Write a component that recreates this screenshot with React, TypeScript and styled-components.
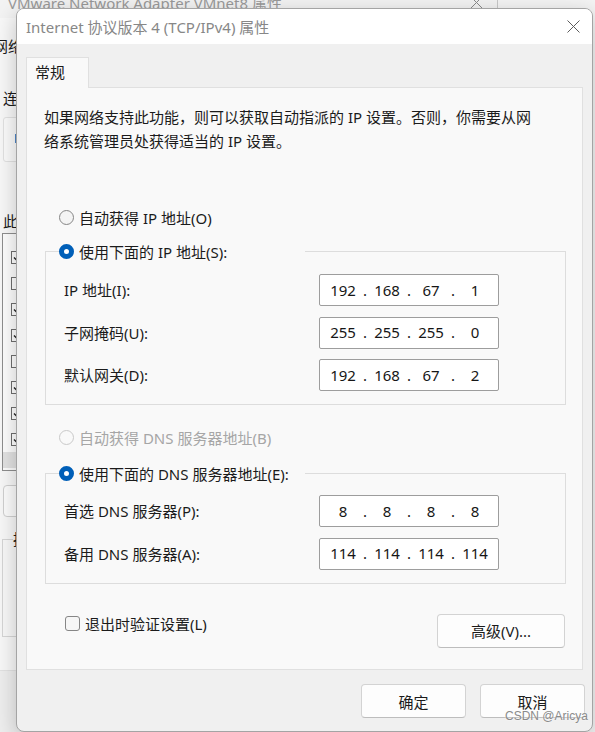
import styled, { createGlobalStyle } from "styled-components";

const GlobalStyle = createGlobalStyle`
  html, body {
    margin: 0;
    padding: 0;
  }
  body {
    font-family: "Noto Sans", "Noto Sans CJK SC", sans-serif;
    font-size: 15px;
    color: #1b1b1b;
  }
`;

const Desktop = styled.div`
  position: relative;
  width: 595px;
  height: 732px;
  overflow: hidden;
  background: #f4f4f4;
`;

/* ---------- window behind (VMnet8 properties) ---------- */

const BackWindow = styled.div`
  position: absolute;
  left: -20px;
  top: -14px;
  width: 517px;
  height: 760px;
  display: flex;
  flex-direction: column;
  background: #f8f8f8;
  border-right: 1px solid #c8c8c8;
`;

const BackTitle = styled.div`
  height: 32px;
  flex-shrink: 0;
  display: flex;
  align-items: center;
  justify-content: space-between;
  padding: 0 14px 0 28px;
  background: #f3f3f3;
  color: #9a9a9a;
  white-space: nowrap;
`;

const BackBody = styled.div`
  display: flex;
  flex-direction: column;
  flex: 1;
  padding-left: 22px;
`;

const BackTab = styled.div`
  height: 32px;
  line-height: 32px;
  margin: 12px 0 0 -9px;
`;

const BackLabel = styled.div<{ $top: number }>`
  line-height: 24px;
  margin-top: ${(p) => p.$top}px;
  margin-left: 1px;
  white-space: nowrap;
`;

const AdapterBox = styled.div`
  height: 45px;
  width: 440px;
  margin: 7px 0 0 1px;
  box-sizing: border-box;
  display: flex;
  align-items: center;
  padding-left: 10px;
  border: 1px solid #e2e2e2;
  border-radius: 3px;
  background: #fbfbfb;
`;

const ItemList = styled.div`
  height: 238px;
  width: 460px;
  box-sizing: border-box;
  display: flex;
  flex-direction: column;
  padding: 10px 0 0 8px;
  border: 1px solid #8e8e8e;
  background: #fdfdfd;
`;

const Item = styled.div`
  height: 26px;
  display: flex;
  align-items: center;
`;

const SmallCheck = styled.span`
  width: 13px;
  height: 13px;
  box-sizing: border-box;
  border: 1px solid #6f6f6f;
  background: #fff;
  display: flex;
  align-items: center;
  justify-content: center;
`;

const ScrollStrip = styled.div`
  height: 16px;
  margin: 0 0 0 -8px;
  background: #e2e2e2;
`;

const BackButton = styled.div`
  height: 32px;
  width: 100px;
  margin: 14px 0 0 1px;
  box-sizing: border-box;
  border: 1px solid #d0d0d0;
  border-radius: 4px;
  background: #fcfcfc;
`;

const BackGroup = styled.fieldset`
  height: 110px;
  width: 460px;
  margin: 10px 0 0 0;
  padding: 0 0 0 10px;
  box-sizing: border-box;
  border: 1px solid #d6d6d6;

  legend {
    padding: 0;
    line-height: 24px;
  }
`;

const BackFooter = styled.div`
  flex: 1;
  margin: 33px 0 0 -22px;
  border-top: 1px solid #e2e2e2;
  background: #eeeeee;
`;

/* ---------- front dialog (TCP/IPv4 properties) ---------- */

const Dialog = styled.div`
  position: absolute;
  left: 16px;
  top: 8px;
  width: 577px;
  height: 724px;
  box-sizing: border-box;
  display: flex;
  flex-direction: column;
  background: #f0f0f0;
  border: 1px solid #a4a4a4;
  border-radius: 8px;
  overflow: hidden;
  box-shadow: 0 6px 22px rgba(0, 0, 0, 0.22);
`;

const TitleBar = styled.div`
  height: 35px;
  flex-shrink: 0;
  display: flex;
  align-items: center;
  justify-content: space-between;
  padding: 0 12px 0 9px;
  background: #ffffff;
  color: #878787;
`;

const Body = styled.div`
  display: flex;
  flex-direction: column;
  padding: 13px 9px 0 9px;
`;

const Tab = styled.div`
  position: relative;
  z-index: 1;
  width: 63px;
  height: 31px;
  box-sizing: border-box;
  margin-bottom: -1px;
  padding-left: 8px;
  line-height: 28px;
  border: 1px solid #e0e0e0;
  border-bottom: none;
  background: #f9f9f9;
`;

const Panel = styled.div`
  height: 583px;
  box-sizing: border-box;
  display: flex;
  flex-direction: column;
  padding: 17px 16px 0 17px;
  border: 1px solid #e0e0e0;
  background: #f9f9f9;
`;

const Description = styled.p`
  margin: 0;
  line-height: 24px;
  white-space: nowrap;
`;

const RadioRow = styled.div<{ $top: number; $disabled?: boolean }>`
  height: 24px;
  display: flex;
  align-items: center;
  margin-top: ${(p) => p.$top}px;
  padding-left: 15px;
  color: ${(p) => (p.$disabled ? "#a6a6a6" : "inherit")};
  white-space: nowrap;
`;

const Radio = styled.span<{ $checked?: boolean; $disabled?: boolean }>`
  width: 15px;
  height: 15px;
  flex-shrink: 0;
  box-sizing: border-box;
  margin-right: 5px;
  border-radius: 50%;
  background: ${(p) => (p.$checked ? "#ffffff" : p.$disabled ? "#f9f9f9" : "#f4f4f4")};
  border: ${(p) =>
    p.$checked
      ? "5px solid #005fb8"
      : p.$disabled
      ? "1px solid #c9c9c9"
      : "1px solid #868686"};
`;

const Group = styled.fieldset<{ $top: number; $padTop: number; $padBottom: number }>`
  margin: ${(p) => p.$top}px 0 0 1px;
  padding: ${(p) => p.$padTop}px 0 ${(p) => p.$padBottom}px 13px;
  border: 1px solid #dddddd;
  display: grid;
  row-gap: 10.5px;
  min-width: 0;
`;

const GroupTitle = styled.legend`
  width: 246px;
  height: 24px;
  padding: 0;
  display: flex;
  align-items: center;
  white-space: nowrap;
`;

const FieldRow = styled.div`
  display: grid;
  grid-template-columns: 260px 180px;
  align-items: center;
`;

const FieldLabel = styled.span`
  padding-left: 5px;
  line-height: 30px;
  white-space: nowrap;
`;

const IpBox = styled.div`
  height: 32px;
  box-sizing: border-box;
  display: grid;
  grid-template-columns: 36px 8px 36px 8px 36px 8px 36px;
  align-items: center;
  padding: 0 5px;
  border: 1px solid #9d9d9d;
  border-radius: 2px;
  background: #ffffff;
  line-height: 29px;
  text-align: center;
  color: #161616;
`;

const BottomRow = styled.div`
  display: flex;
  align-items: flex-start;
  justify-content: space-between;
  margin-top: 28px;
  padding-left: 21px;
  margin-right: 1px;
`;

const CheckRow = styled.label`
  height: 24px;
  display: flex;
  align-items: center;
  gap: 5px;
  white-space: nowrap;
`;

const CheckBox = styled.span`
  width: 15px;
  height: 15px;
  box-sizing: border-box;
  border: 1px solid #868686;
  border-radius: 3px;
  background: #f6f6f6;
`;

const Button = styled.button<{ $width: number; $top?: number }>`
  width: ${(p) => p.$width}px;
  height: 34px;
  margin-top: ${(p) => p.$top ?? 0}px;
  padding: 0;
  box-sizing: border-box;
  font: inherit;
  color: #1b1b1b;
  background: #fdfdfd;
  border: 1px solid #d3d3d3;
  border-bottom-color: #bdbdbd;
  border-radius: 4px;
`;

const Footer = styled.div`
  display: flex;
  justify-content: flex-end;
  gap: 14px;
  margin: 14px -2px 0 0;
`;

const Watermark = styled.div`
  position: absolute;
  left: 505px;
  top: 708px;
  font-family: "Liberation Sans", Arial, sans-serif;
  font-size: 12px;
  line-height: 16px;
  color: #8a8a8a;
  text-shadow: 0 0 2px #ffffff;
`;

const CloseIcon = ({ color }: { color: string }) => (
  <svg width="13" height="13" viewBox="0 0 13 13">
    <path d="M0.5 0.5 L12.5 12.5 M12.5 0.5 L0.5 12.5" stroke={color} strokeWidth="1" fill="none" />
  </svg>
);

const Tick = () => (
  <svg width="9" height="9" viewBox="0 0 9 9">
    <path d="M1 4.5 L3.5 7 L8 1.5" stroke="#222" strokeWidth="1.4" fill="none" />
  </svg>
);

const IpValue = ({ parts }: { parts: string[] }) => (
  <IpBox>
    {parts.flatMap((part, i) =>
      i > 0
        ? [<span key={`d${i}`}>.</span>, <span key={`p${i}`}>{part}</span>]
        : [<span key={`p${i}`}>{part}</span>]
    )}
  </IpBox>
);

// only the check boxes of the list peek out from behind the dialog
const checked = [true, false, true, true, false, true, true, true];

const App = () => {
  return (
    <>
      <GlobalStyle />
      <Desktop>
        <BackWindow>
          <BackTitle>
            <span>VMware Network Adapter VMnet8 属性</span>
            <CloseIcon color="#8a8a8a" />
          </BackTitle>
          <BackBody>
            <BackTab>网络</BackTab>
            <BackLabel $top={24}>连接时使用:</BackLabel>
            <AdapterBox>
              <svg width="16" height="16" viewBox="0 0 16 16">
                <rect x="1" y="2" width="14" height="9" fill="#4f86c6" />
                <rect x="6" y="11" width="4" height="3" fill="#7a7a7a" />
              </svg>
            </AdapterBox>
            <BackLabel $top={47}>此连接使用下列项目(O):</BackLabel>
            <ItemList>
              {checked.map((on, i) => (
                <Item key={i}>
                  <SmallCheck>{on && <Tick />}</SmallCheck>
                </Item>
              ))}
              <ScrollStrip />
            </ItemList>
            <BackButton />
            <BackGroup>
              <legend>描述</legend>
            </BackGroup>
            <BackFooter />
          </BackBody>
        </BackWindow>

        <Dialog>
          <TitleBar>
            <span>Internet 协议版本 4 (TCP/IPv4) 属性</span>
            <CloseIcon color="#5c5c5c" />
          </TitleBar>
          <Body>
            <Tab>常规</Tab>
            <Panel>
              <Description>
                如果网络支持此功能，则可以获取自动指派的 IP 设置。否则，你需要从网
                <br />
                络系统管理员处获得适当的 IP 设置。
              </Description>

              <RadioRow $top={52}>
                <Radio />
                自动获得 IP 地址(O)
              </RadioRow>
              <Group $top={10} $padTop={11} $padBottom={13}>
                <GroupTitle>
                  <Radio $checked />
                  使用下面的 IP 地址(S):
                </GroupTitle>
                <FieldRow>
                  <FieldLabel>IP 地址(I):</FieldLabel>
                  <IpValue parts={["192", "168", "67", "1"]} />
                </FieldRow>
                <FieldRow>
                  <FieldLabel>子网掩码(U):</FieldLabel>
                  <IpValue parts={["255", "255", "255", "0"]} />
                </FieldRow>
                <FieldRow>
                  <FieldLabel>默认网关(D):</FieldLabel>
                  <IpValue parts={["192", "168", "67", "2"]} />
                </FieldRow>
              </Group>

              <RadioRow $top={20} $disabled>
                <Radio $disabled />
                自动获得 DNS 服务器地址(B)
              </RadioRow>
              <Group $top={12} $padTop={10} $padBottom={13}>
                <GroupTitle>
                  <Radio $checked />
                  使用下面的 DNS 服务器地址(E):
                </GroupTitle>
                <FieldRow>
                  <FieldLabel>首选 DNS 服务器(P):</FieldLabel>
                  <IpValue parts={["8", "8", "8", "8"]} />
                </FieldRow>
                <FieldRow>
                  <FieldLabel>备用 DNS 服务器(A):</FieldLabel>
                  <IpValue parts={["114", "114", "114", "114"]} />
                </FieldRow>
              </Group>

              <BottomRow>
                <CheckRow>
                  <CheckBox />
                  退出时验证设置(L)
                </CheckRow>
                <Button $width={128} $top={2}>高级(V)...</Button>
              </BottomRow>
            </Panel>
            <Footer>
              <Button $width={105}>确定</Button>
              <Button $width={105}>取消</Button>
            </Footer>
          </Body>
        </Dialog>

        <Watermark>CSDN @Aricya</Watermark>
      </Desktop>
    </>
  );
};

export default App;
